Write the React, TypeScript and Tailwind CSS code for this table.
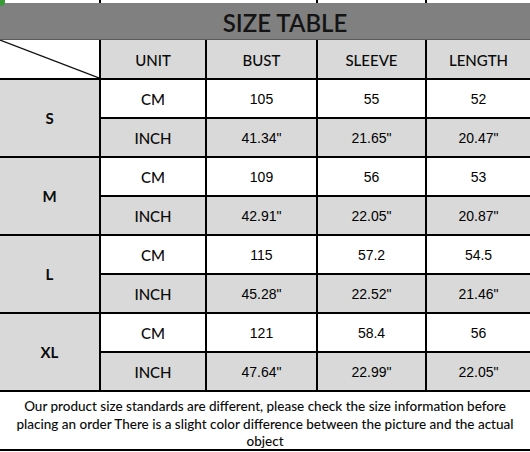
import React from "react";

const rows = [
  { size: "S", cm: ["105", "55", "52"], inch: ['41.34"', '21.65"', '20.47"'] },
  { size: "M", cm: ["109", "56", "53"], inch: ['42.91"', '22.05"', '20.87"'] },
  { size: "L", cm: ["115", "57.2", "54.5"], inch: ['45.28"', '22.52"', '21.46"'] },
  { size: "XL", cm: ["121", "58.4", "56"], inch: ['47.64"', '22.99"', '22.05"'] },
];

const cal = { fontFamily: 'Lato, "Open Sans", sans-serif' };
const ari = { fontFamily: '"Liberation Sans", Arial, sans-serif' };

export default function App() {
  return (
    <div className="w-[530px] h-[452px] bg-white overflow-hidden text-[#0a0a0a]">
      {/* top strip */}
      <div className="relative h-[3px] flex bg-white">
        <div className="w-[99px]" />
        <div className="w-[2px] bg-black" />
        <div className="w-[215px]" />
        <div className="w-[2px] bg-black" />
        <div className="w-[107px]" />
        <div className="w-[2px] bg-black" />
        <div className="absolute left-0 top-0 w-[5px] h-[6px] bg-[#3a9a3a] rounded-br-[4px]" />
      </div>
      {/* title */}
      <div
        className="h-[37px] bg-[#808080] flex items-center justify-center text-[24px] leading-none font-semibold text-[#141414] border-b border-[#5a5a5a]"
        style={cal}
      >
        <span className="pl-[40px] pt-[3px]">SIZE TABLE</span>
      </div>
      {/* table */}
      <div className="grid grid-cols-[99px_104px_109px_107px_103px] grid-rows-[38px_repeat(8,37px)] gap-[2px] bg-black border-b-2 border-black">
        <div className="relative bg-white">
          <svg className="absolute inset-0 w-full h-full" viewBox="0 0 99 38" preserveAspectRatio="none">
            <line x1="0" y1="0" x2="99" y2="38" stroke="#111" strokeWidth="1.2" />
          </svg>
        </div>
        {["UNIT", "BUST", "SLEEVE", "LENGTH"].map((h) => (
          <div key={h} className="bg-[#d9d9d9] flex items-center justify-center text-[15px] font-medium pt-[2px]" style={cal}>
            {h}
          </div>
        ))}
        {rows.map((r) => (
          <React.Fragment key={r.size}>
            <div className="row-span-2 bg-[#d9d9d9] flex items-center justify-center text-[15px] font-bold" style={cal}>
              {r.size}
            </div>
            <div className="bg-white flex items-center justify-center text-[15px] font-medium pt-[1px]" style={cal}>CM</div>
            {r.cm.map((v, i) => (
              <div key={"c" + i} className="bg-white flex items-center justify-center text-[14px] pt-[1px] text-black" style={ari}>
                {v}
              </div>
            ))}
            <div className="bg-[#d9d9d9] flex items-center justify-center text-[15px] font-medium pt-[1px]" style={cal}>INCH</div>
            {r.inch.map((v, i) => (
              <div key={"i" + i} className="bg-[#d9d9d9] flex items-center justify-center text-[14px] pt-[1px] text-black" style={ari}>
                {v}
              </div>
            ))}
          </React.Fragment>
        ))}
      </div>
      {/* footer */}
      <div className="h-[59px] flex items-start justify-center pt-[6px] border-b-2 border-black" style={cal}>
        <p className="w-[500px] text-center text-[13.5px] font-medium leading-[17.5px]">
          Our product size standards are different, please check the size information before placing an order There is a slight color difference between the picture and the actual object
        </p>
      </div>
    </div>
  );
}
